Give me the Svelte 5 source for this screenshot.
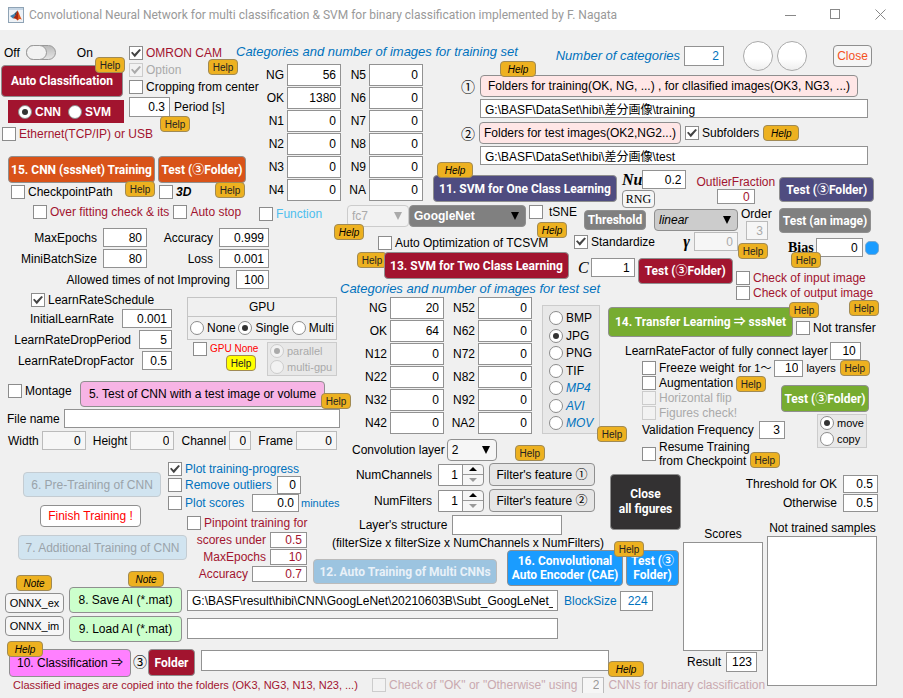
<script>
  const trainingSet = [
    ['NG', 56], ['OK', 1380], ['N1', 0], ['N2', 0], ['N3', 0], ['N4', 0],
    ['N5', 0], ['N6', 0], ['N7', 0], ['N8', 0], ['N9', 0], ['NA', 0]
  ];
  const testSet = [
    ['NG', 20], ['OK', 64], ['N12', 0], ['N22', 0], ['N32', 0], ['N42', 0],
    ['N52', 0], ['N62', 0], ['N72', 0], ['N82', 0], ['N92', 0], ['NA2', 0]
  ];
  const formats = ['BMP', 'JPG', 'PNG', 'TIF', 'MP4', 'AVI', 'MOV'];
  const videoFormats = ['MP4', 'AVI', 'MOV'];
</script>

{#snippet help(place = '', text = 'Help')}
  <button type="button" class="help {place}">{text}</button>
{/snippet}

{#snippet check(text, checked = false, cls = '', disabled = false)}
  <label class="opt {cls}" class:off={disabled}>
    <input type="checkbox" {checked} {disabled} /><span>{text}</span>
  </label>
{/snippet}

{#snippet radio(name, text, checked = false, cls = '', disabled = false)}
  <label class="opt {cls}" class:off={disabled}>
    <input type="radio" {name} {checked} {disabled} /><span>{text}</span>
  </label>
{/snippet}

{#snippet field(text, value, cls = '', disabled = false)}
  <label class="field {cls}">
    <span>{text}</span><input type="text" {value} {disabled} />
  </label>
{/snippet}

<div class="window">
  <header class="titlebar">
    <svg width="16" height="16" viewBox="0 0 16 16" aria-hidden="true">
      <rect x="0.5" y="0.5" width="15" height="15" fill="#eef2f6" stroke="#8fa3b5" />
      <rect x="1" y="1" width="14" height="2" fill="#c5d5e4" />
      <path d="M2 9 L6 7 L8 9 L5 11.500 Z" fill="#3d7fae" />
      <path d="M6 7 L9.500 3.500 L8 9 Z" fill="#27566f" />
      <path d="M9.500 3.500 C11 5 12 10 14 12.500 C12 11.500 11 12 9.500 13.500 C8.500 12 7 11 5 11.500 C7 10 8.500 7 9.500 3.500Z" fill="#e0561b" />
      <path d="M9.500 3.500 C10 6 10.500 9 9.500 13.500 C8.500 12 7 11 5 11.500 C7 10 8.500 7 9.500 3.500Z" fill="#a3260f" />
    </svg>
    <h1>Convolutional Neural Network for multi classification &amp; SVM for binary classification implemented by F. Nagata</h1>
    <div class="winctl">
      <button type="button" aria-label="Minimize"><svg width="12" height="12"><path d="M0 6.500H11" /></svg></button>
      <button type="button" aria-label="Maximize"><svg width="12" height="12"><rect x="0.500" y="0.500" width="9" height="9" /></svg></button>
      <button type="button" aria-label="Close window"><svg width="12" height="12"><path d="M0.500 0.500L10.500 10.500M10.500 0.500L0.500 10.500" /></svg></button>
    </div>
  </header>

  <section class="upper">
    <div class="auto">
      <div class="pair">
        <div class="auto-main">
          <div class="switch-row">
            <span>Off</span>
            <button type="button" class="switch" role="switch" aria-checked="false" aria-label="Auto classification power"></button>
            <span>On</span>
          </div>
          <div class="host">
            <button type="button" class="btn maroon big">Auto Classification</button>
            {@render help('over h-auto')}
          </div>
          <div class="model">
            {@render radio('model', 'CNN', true)}
            {@render radio('model', 'SVM')}
          </div>
        </div>
        <div class="camera">
          {@render check('OMRON CAM', true, 'red')}
          <div class="host">{@render check('Option', true, '', true)}{@render help('over h-option')}</div>
          {@render check('Cropping from center')}
          <div class="host">
            <label class="field"><input type="text" value="0.3" class="w41" /><span>Period [s]</span></label>
            {@render help('over h-period')}
          </div>
        </div>
      </div>
      {@render check('Ethernet(TCP/IP) or USB', false, 'red ether')}
      <div class="train">
        <div class="host">
          <button type="button" class="btn orange w147">15. CNN (sssNet) Training</button>
          {@render help('over h-train')}
        </div>
        <div class="host">
          <button type="button" class="btn orange w88">Test (③Folder)</button>
          {@render help('over h-traintest')}
        </div>
      </div>
      <div class="ckpt">
        {@render check('CheckpointPath')}
        {@render check('3D', false, 'threed')}
      </div>
    </div>

    <div class="upper-right">
      <div class="head">
        <h2>Categories and number of images for training set</h2>
        <div class="headctl">
          <label class="field numcat"><span>Number of categories</span><input type="text" value="2" /></label>
          <div class="lamps"><i></i><i></i></div>
          <button type="button" class="btn plain closebtn">Close</button>
        </div>
      </div>
      <div class="upper-body">
        <div class="counts train-counts">
          {#each trainingSet as [name, n]}{@render field(name, n)}{/each}
        </div>
        <div class="folders">
          <div class="frow host">
            <span class="circ">①</span>
            <button type="button" class="btn pale w378">Folders for training(OK, NG, ...) , for cllasified images(OK3, NG3, ...)</button>
            {@render help('over it wide h-folders')}
          </div>
          <input class="path" type="text" value="G:\BASF\DataSet\hibi\差分画像\training" aria-label="Training folder" />
          <div class="frow second">
            <span class="circ">②</span>
            <button type="button" class="btn pale w202">Folders for test images(OK2,NG2...)</button>
            {@render check('Subfolders', true)}
            {@render help('it wide')}
          </div>
          <input class="path" type="text" value="G:\BASF\DataSet\hibi\差分画像\test" aria-label="Test folder" />
          <div class="oneclass">
            <div class="host one-btn">
              <button type="button" class="btn purple w184">11. SVM for One Class Learning</button>
              {@render help('over it wide h-one')}
            </div>
            <div class="nu">
              <label class="field math"><span>Nu</span><input type="text" value="0.2" class="w44" /></label>
              <button type="button" class="btn plain rng">RNG</button>
            </div>
            <label class="outlier red"><span>OutlierFraction</span><input type="text" value="0" /></label>
            <button type="button" class="btn purple w95 one-test">Test (③Folder)</button>
          </div>
        </div>
      </div>
    </div>
  </section>

  <section class="middle">
    <div class="params">
      <div class="stop-row">
        {@render check('Over fitting check & its', false, 'red')}
        {@render check('Auto stop', false, 'red')}
        {@render check('Function', false, 'sky')}
      </div>
      <div class="limits">
        {@render field('MaxEpochs', 80, 'w44in')}
        {@render field('Accuracy', '0.999', 'w50in')}
        {@render field('MiniBatchSize', 80, 'w44in')}
        {@render field('Loss', '0.001', 'w50in')}
        {@render field('Allowed times of not Improving', 100, 'span w33in')}
      </div>
      <div class="pair">
        <div class="rates">
          {@render check('LearnRateSchedule', true, 'sched')}
          {@render field('InitialLearnRate', '0.001', 'w50in')}
          {@render field('LearnRateDropPeriod', 5, 'w33in')}
          {@render field('LearnRateDropFactor', 0.5, 'w30in')}
        </div>
        <div class="gpu">
          <div class="gpu-panel">
            <h3>GPU</h3>
            <div>
              {@render radio('gpu', 'None')}
              {@render radio('gpu', 'Single', true)}
              {@render radio('gpu', 'Multi')}
            </div>
          </div>
          <div class="gpu-more">
            <div class="host">
              {@render check('GPU None', false, 'alert')}
              {@render help('over yellow h-gpu')}
            </div>
            <div class="panel par">
              {@render radio('par', 'parallel', true, '', true)}
              {@render radio('par', 'multi-gpu', false, '', true)}
            </div>
          </div>
        </div>
      </div>
      <div class="montage">
        {@render check('Montage')}
        <div class="host">
          <button type="button" class="btn pink w245">5. Test of CNN with a test image or volume</button>
          {@render help('over h-montage')}
        </div>
      </div>
      <label class="field fname"><span>File name</span><input type="text" /></label>
      <div class="dims">
        {@render field('Width', 0, 'w44in', true)}
        {@render field('Height', 0, 'w44in', true)}
        {@render field('Channel', 0, 'w22in', true)}
        {@render field('Frame', 0, 'w41in', true)}
      </div>
    </div>

    <div class="work">
      <div class="svm-left">
        <div class="nets host">
          <span class="sel fc off"><select disabled aria-label="Feature layer"><option>fc7</option></select></span>
          <span class="sel net"><select aria-label="Network"><option>GoogleNet</option></select></span>
          {@render check('tSNE', false, 'tsne')}
          {@render help('over it h-fc')}
          {@render help('over it h-tsne')}
        </div>
        {@render check('Auto Optimization of TCSVM', false, 'tcsvm')}
        <div class="host two">
          {@render help('over h-two')}
          <button type="button" class="btn maroon w185 front">13. SVM for Two Class Learning</button>
        </div>
      </div>

      <div class="svm-right">
        <div class="kernel">
          <div class="k1">
            <button type="button" class="btn gray w62">Threshold</button>
            <span class="sel lin"><select aria-label="Kernel"><option>linear</option></select></span>
          </div>
          <div class="k2">
            {@render check('Standardize', true)}
            {@render field('γ', 0, 'math gamma w44in', true)}
          </div>
          <div class="k3">
            {@render field('C', 1, 'math thin w44in')}
            <button type="button" class="btn maroon w95">Test (③Folder)</button>
          </div>
        </div>
        <div class="order-side">
          <div class="order-top">
            <div class="order">
              <label><span>Order</span><input type="text" value="3" disabled /></label>
              {@render help()}
            </div>
            <div class="bias">
              <button type="button" class="btn gray w92">Test (an image)</button>
              <div class="host bias-row">
                {@render field('Bias', 0, 'math straight w47in')}
                <i class="dot"></i>
                {@render help('over h-bias')}
              </div>
            </div>
          </div>
          {@render check('Check of input image', false, 'red')}
          {@render check('Check of output image', false, 'red')}
        </div>
      </div>

      <div class="test-area">
        <h2>Categories and number of images for test set</h2>
        <div class="test-body">
          <div class="counts test-counts">
            {#each testSet as [name, n]}{@render field(name, n)}{/each}
          </div>
          <div class="panel formats">
            {#each formats as f}{@render radio('format', f, f === 'JPG', videoFormats.includes(f) ? 'video' : '')}{/each}
            {@render help('over h-format')}
          </div>
        </div>
        <div class="conv">
          <label for="conv">Convolution layer</label>
          <span class="sel cv"><select id="conv"><option>2</option></select></span>
          {@render help()}
        </div>
      </div>

      <div class="transfer">
        <div class="tl">
          <div class="host">
            <button type="button" class="btn green w185 tall">14. Transfer Learning ⇒ sssNet</button>
            {@render help('over h-tl')}
            {@render help('over h-tl2')}
          </div>
          {@render check('Not transfer', false, 'nott')}
        </div>
        {@render field('LearnRateFactor of fully connect layer', 10, 'lrf')}
        <div class="freeze">
          {@render check('Freeze weight')}
          <label class="field layers"><span>for 1～</span><input type="text" value="10" /><span>layers</span></label>
          {@render help()}
        </div>
        <div class="pair">
          <div class="tchecks">
            <div class="aug">{@render check('Augmentation')}{@render help()}</div>
            {@render check('Horizontal flip', false, '', true)}
            {@render check('Figures check!', false, '', true)}
            {@render field('Validation Frequency', 3, 'valid')}
            <div class="resume">
              {@render check('Resume Training\nfrom Checkpoint', false, 'lines')}
              {@render help()}
            </div>
          </div>
          <div class="ttest">
            <button type="button" class="btn green w88">Test (③Folder)</button>
            <div class="panel mc">
              {@render radio('mc', 'move', true)}
              {@render radio('mc', 'copy')}
            </div>
          </div>
        </div>
      </div>
    </div>
  </section>

  <section class="lower">
    <div class="low-main">
      <div class="pair">
        <div class="low-left">
          <div class="pair">
            <div class="stages">
              <button type="button" class="btn fade w138" disabled>6. Pre-Training of CNN</button>
              <button type="button" class="btn plain finish">Finish Training !</button>
              <button type="button" class="btn fade w169" disabled>7. Additional Training of CNN</button>
            </div>
            <div class="plots">
              {@render check('Plot training-progress', true, 'blue')}
              <div class="prow">{@render check('Remove outliers', false, 'blue')}<input type="text" value="0" class="w24" aria-label="Outliers" /></div>
              <div class="prow">{@render check('Plot scores', false, 'blue')}<input type="text" value="0.0" class="w47" aria-label="Minutes" /><span class="unit blue">minutes</span></div>
              {@render check('Pinpoint training for', false, 'red pin')}
              {@render field('scores under', 0.5, 'red w37in')}
              {@render field('MaxEpochs', 10, 'red w37in')}
              {@render field('Accuracy', 0.7, 'red w55in')}
            </div>
            <div class="filters">
              <div class="pair">
                <div class="fcol">
                  <div class="spin-row">
                    <label for="nch">NumChannels</label>
                    <span class="spin"><input id="nch" type="text" value="1" /><span><button type="button" aria-label="More channels"></button><button type="button" aria-label="Fewer channels"></button></span></span>
                    <button type="button" class="btn light">Filter's feature ①</button>
                  </div>
                  <div class="spin-row">
                    <label for="nfi">NumFilters</label>
                    <span class="spin"><input id="nfi" type="text" value="1" /><span><button type="button" aria-label="More filters"></button><button type="button" aria-label="Fewer filters"></button></span></span>
                    <button type="button" class="btn light">Filter's feature ②</button>
                  </div>
                  {@render field("Layer's structure", '', 'struct')}
                  <p>(filterSize x filterSize x NumChannels x NumFilters)</p>
                </div>
                <button type="button" class="btn black">Close<br />all figures</button>
              </div>
              <div class="encoders">
                <button type="button" class="btn multi" disabled>12. Auto Training of Multi CNNs</button>
                <button type="button" class="btn azure w116">16. Convolutional<br />Auto Encoder (CAE)</button>
                <div class="host">
                  <button type="button" class="btn azure w53">Test (③<br />Folder)</button>
                  {@render help('over h-cae')}
                </div>
              </div>
            </div>
          </div>

          <div class="io">
            <div class="onnx host">
              <button type="button" class="btn plain">ONNX_ex</button>
              <button type="button" class="btn plain">ONNX_im</button>
              {@render help('over it wide h-onnx', 'Note')}
            </div>
            <div class="ai host">
              <button type="button" class="btn mint">8. Save AI (*.mat)</button>
              <button type="button" class="btn mint">9. Load AI (*.mat)</button>
              {@render help('over it wide h-save', 'Note')}
            </div>
            <div class="files">
              <div>
                <input type="text" value="G:\BASF\result\hibi\CNN\GoogLeNet\20210603B\Subt_GoogLeNet_" aria-label="Saved network" />
                {@render field('BlockSize', 224, 'blue block')}
              </div>
              <input type="text" aria-label="Loaded network" />
            </div>
          </div>

          <div class="classify">
            <div class="host">
              <button type="button" class="btn magenta">10. Classification ⇒</button>
              {@render help('over it wide h-class')}
            </div>
            <span class="circ">③</span>
            <button type="button" class="btn maroon w47">Folder</button>
            <div class="host dest">
              <input type="text" aria-label="Classification folder" />
              {@render help('over it wide h-dest')}
            </div>
          </div>
        </div>

        <div class="scores">
          <label for="scores">Scores</label>
          <select id="scores" multiple></select>
          <label class="field result"><span>Result</span><input type="text" value="123" /></label>
        </div>
      </div>

      <div class="foot">
        <span class="red note">Classified images are copied into the folders (OK3, NG3, N13, N23, ...)</span>
        {@render check('Check of "OK" or "Otherwise" using', false, 'binary', true)}
        <input type="text" value="2" disabled aria-label="Number of CNNs" />
        <span class="cnns">CNNs for binary classification</span>
      </div>
    </div>

    <div class="samples">
      {@render field('Threshold for OK', 0.5, 'w35in')}
      {@render field('Otherwise', 0.5, 'w35in')}
      <label for="samples">Not trained samples</label>
      <select id="samples" multiple></select>
    </div>
  </section>
</div>

<style>
  :global(body) { margin: 0; background: #f0f0f0; }
  .window, .window :is(button, input, select) {
    font-family: "Liberation Sans", Arial, "Noto Sans CJK JP", sans-serif;
    font-size: 12px;
    line-height: 14px;
  }
  .window { min-width: 900px; background: #f0f0f0; color: #000; white-space: nowrap; overflow: hidden; }
  .window *, .window *::before, .window *::after { box-sizing: border-box; }
  button, input, select { margin: 0; flex-shrink: 0; }
  h1, h2, h3, p { margin: 0; font-size: 12px; font-weight: 400; }
  h2 { font-size: 13px; font-style: italic; color: #0072bd; }

  .titlebar { display: flex; align-items: center; height: 30px; padding: 0 16px 0 8px; background: #fff; }
  .titlebar h1 { margin-left: 5px; flex: 1; color: #999; font-family: Roboto, "Noto Sans", sans-serif; }
  .winctl { display: flex; gap: 33px; }
  .winctl button { width: 12px; height: 12px; padding: 0; border: 0; background: none; }
  .winctl svg { display: block; fill: none; stroke: #888; }

  .host { position: relative; }
  .pair { display: flex; }
  .red { color: #a2142f; }
  .blue { color: #0072bd; }
  .sky { color: #4dbeee; }

  /* text boxes */
  input[type="text"] {
    height: 19px; padding: 0 4px; border: 1px solid #929292; border-radius: 0;
    background: #fff; color: #000; text-align: right;
  }
  input[type="text"]:disabled { background: #f6f6f6; border-color: #bbb; color: #000; }
  .red input[type="text"], .blue input[type="text"], .numcat input[type="text"] { color: inherit; }
  .field { display: flex; align-items: center; justify-content: flex-end; gap: 4px; }
  .w24 { width: 24px; }
  .w41 { width: 41px; }
  .w44, .w44in input { width: 44px; }
  .w47 { width: 47px; }
  .w22in input { width: 22px; }
  .w30in input { width: 30px; }
  .w33in input { width: 33px; }
  .w35in input { width: 35px; }
  .w37in input { width: 37px; }
  .w41in input { width: 41px; }
  .w47in input { width: 47px; }
  .w50in input { width: 50px; }
  .w55in input { width: 55px; }

  /* tick boxes and radios */
  .opt { display: flex; align-items: center; gap: 3px; }
  .opt input {
    appearance: none; width: 14px; height: 14px; border: 1px solid #8c8c8c;
    background: #fff; display: grid; place-items: center;
  }
  .opt input[type="radio"] { border-radius: 50%; }
  .opt input[type="checkbox"]:checked::before {
    content: ""; width: 10px; height: 9px; background: #444;
    clip-path: polygon(0 48%, 14% 36%, 36% 62%, 84% 6%, 100% 18%, 38% 96%);
  }
  .opt input[type="radio"]:checked::before { content: ""; width: 6px; height: 6px; border-radius: 50%; background: #333; }
  .off { color: #aaa; }
  .off input { background: #f2f2f2; border-color: #ccc; }
  .off input:checked::before { background: #aaa !important; }

  /* buttons */
  .btn {
    height: 27px; padding: 0; border: 1px solid #8f8f8f; border-radius: 4px;
    background: #f6f6f6; color: #000; text-align: center; white-space: nowrap;
  }
  .maroon, .orange, .purple, .gray, .green, .black, .azure, .multi { color: #fff; font-weight: 700; }
  .window :is(.maroon, .orange, .purple, .gray, .green, .black, .azure, .multi) {
    font-family: Roboto, "Liberation Sans", "Noto Sans CJK JP", sans-serif;
  }
  .maroon { background: #a2142f; }
  .orange { background: #d95319; }
  .purple { background: #4f4c80; }
  .gray { background: #808080; }
  .green { background: #77ac30; }
  .black { background: #333132; }
  .azure { background: #1a9cff; }
  .multi { background: #9cc4e0; color: #e9f1f8; border-color: #bbb; }
  .pale { background: #ffe6e6; }
  .pink { background: #f7b4e5; }
  .mint { background: #ccffcc; }
  .magenta { background: #ff80ff; }
  .light { background: #e6e6e6; }
  .fade { background: #d1e4f0; border-color: #c4ccd2; color: #9aa3aa; }
  .w47.btn { width: 47px; }
  .w53 { width: 53px; }
  .w62 { width: 62px; }
  .w88 { width: 88px; }
  .w92 { width: 92px; }
  .w95 { width: 95px; }
  .w116 { width: 116px; }
  .w138 { width: 138px; }
  .w147 { width: 147px; }
  .w169 { width: 169px; }
  .w184 { width: 184px; }
  .w185 { width: 185px; }
  .w202 { width: 202px; }
  .w245 { width: 245px; }
  .w378 { width: 378px; }

  .window .help {
    width: 30px; height: 16px; padding: 1px 0 0; border: 1px solid #a08a55; border-radius: 4px;
    background: #edb120; color: #222; font-size: 10px; line-height: 13px; z-index: 1;
  }
  .window .help.it { font-style: italic; color: #000; }
  .window .help.wide { width: 36px; }
  .window .help.yellow { background: #ffff00; }
  .over { position: absolute; }
  .h-auto { left: 95px; top: -8px; }
  .h-option { left: 79px; top: -4px; }
  .h-period { left: 31px; top: 19px; }
  .h-train { right: 0; top: 25px; }
  .h-traintest { right: 1px; top: 26px; }
  .h-folders { left: 67px; top: -14px; }
  .h-one { left: 4px; top: -13px; }
  .h-gpu { left: 33px; top: 13px; }
  .h-montage { right: -26px; top: 12px; }
  .h-fc { left: -6px; top: 19px; }
  .h-tsne { left: 197px; top: 17px; }
  .h-two { left: -27px; top: 0; }
  .h-bias { left: 12px; top: 14px; }
  .h-format { right: -28px; bottom: -9px; }
  .h-tl { right: -26px; top: -5px; }
  .h-tl2 { right: -86px; top: -7px; }
  .h-cae { left: -12px; top: -9px; }
  .h-onnx { left: 11px; top: -12px; }
  .h-save { left: 59px; top: -16px; }
  .h-class { left: -2px; top: -8px; }
  .h-dest { right: -35px; top: 11px; }
  .front { position: relative; z-index: 2; }

  .panel { border: 1px solid #ccc; background: #e8e8e8; }
  .circ { width: 14px; font: 14px/16px "Noto Sans CJK JP", sans-serif; }

  /* drop-downs */
  .sel { position: relative; display: block; flex-shrink: 0; }
  .sel select {
    appearance: none; width: 100%; height: 22px; padding: 0 4px; border: 1px solid #8f8f8f;
    border-radius: 4px; background: #f6f6f6; color: #000; opacity: 1;
  }
  .sel::after {
    content: ""; position: absolute; right: 7px; top: 7px; pointer-events: none;
    border: 4px solid transparent; border-top: 8px solid #000; border-bottom: 0;
  }
  .fc { width: 62px; margin-left: 7px; }
  .fc select { color: #aaa; border-color: #ccc; background: #f2f2f2; }
  .fc::after { border-top-color: #aaa; }
  .net { width: 117px; }
  .net select { background: #808080; color: #fff; font-weight: 700; }
  .lin { width: 84px; margin-left: 8px; }
  .lin select { background: #ccc; font-style: italic; }
  .cv { width: 50px; }

  /* upper */
  .upper { display: flex; padding-top: 10px; }
  .auto { width: 262px; flex-shrink: 0; }
  .auto-main { width: 124px; margin-right: 5px; }
  .switch-row { display: flex; align-items: center; height: 25px; padding-left: 4px; }
  .switch {
    width: 30px; height: 15px; margin: 0 21px 0 6px; padding: 0; border: 1px solid #999;
    border-radius: 8px; background: linear-gradient(#bbb, #e4e4e4);
  }
  .switch::before {
    content: ""; display: block; width: 21px; height: 15px; margin: -1px; border: 1px solid #999;
    border-radius: 8px; background: #f2f2f2;
  }
  .window .big { width: 122px; height: 32px; margin-left: 1px; display: block; }
  .model {
    display: flex; gap: 7px; align-items: center; height: 23px; margin: 3px 0 0 8px; padding-left: 10px;
    background: #a2142f; color: #fff; font-weight: 700;
  }
  .camera { display: flex; flex-direction: column; gap: 3px; padding-top: 6px; }
  .camera .field { justify-content: flex-start; }
  .camera input[type="text"] { height: 20px; }
  .ether { padding-left: 2px; margin-top: 4px; }
  .train { display: flex; gap: 3px; margin: 15px 0 2px 8px; }
  .train .btn { display: block; }
  .ckpt { display: grid; grid-template-columns: 148px auto; padding-left: 11px; }
  .threed { font-weight: 700; font-style: italic; }

  .upper-right { flex: 1; }
  .head { display: flex; height: 24px; padding-right: 31px; justify-content: space-between; align-items: flex-start; }
  .head h2 { margin: 5px 0 0 -26px; }
  .headctl { display: flex; align-items: center; height: 32px; }
  .numcat { color: #0072bd; font-size: 13px; font-style: italic; }
  .numcat input { width: 40px; height: 20px; }
  .lamps { display: flex; gap: 4px; margin: 0 26px 0 19px; }
  .lamps i {
    width: 30px; height: 30px; border: 1px solid #aaa; border-radius: 50%;
    background: linear-gradient(#fff 60%, #eee);
  }
  .closebtn { width: 39px; height: 22px; color: #f4511e; }
  .upper-body { display: flex; }
  .counts { display: grid; grid-template-rows: repeat(6, 22px); grid-auto-flow: column; row-gap: 1px; }
  .counts .field { gap: 3px; }
  .counts input { width: 54px; height: 22px; }
  .train-counts { grid-template-columns: 79px 82px; }
  .folders { flex: 1; display: flex; flex-direction: column; padding: 11px 0 0 10px; }
  .frow { display: flex; align-items: center; gap: 5px; padding-left: 28px; }
  .frow .btn { height: 22px; }
  .second { gap: 4px; margin-top: 4px; }
  .folders .path { margin: 2px 35px 0 47px; text-align: left; }
  .oneclass { display: flex; align-items: flex-start; margin: 5px 0 -4px; }
  .one-btn { margin-top: 5px; }
  .nu { margin-left: 5px; }
  .rng { width: 33px; height: 18px; display: block; margin-top: 1px; font-family: "Liberation Serif", serif !important; }
  .math { font: italic 700 16px/18px "Liberation Serif", serif; gap: 0; }
  .math.thin { font-weight: 400; gap: 2px; }
  .math.gamma { gap: 4px; }
  .math.straight { font-style: normal; gap: 2px; }
  .math.straight span { font-size: 14px; }
  .outlier { margin: 5px 0 0 10px; display: flex; flex-direction: column; align-items: center; }
  .outlier input { width: 38px; height: 15px; }
  .one-test { height: 25px; margin: 7px 0 0 4px; }

  /* middle */
  .middle { display: flex; }
  .params { width: 340px; flex-shrink: 0; padding-top: 1px; }
  .stop-row { display: flex; gap: 4px; padding-left: 33px; height: 14px; }
  .stop-row .sky { margin: 3px 0 0 14px; }
  .limits { display: grid; grid-template-columns: 147px 122px; row-gap: 2px; margin: 9px 0 4px; }
  .limits .field { gap: 6px; }
  .span { grid-column: span 2; }
  .rates { display: flex; flex-direction: column; gap: 2px; width: 172px; }
  .rates .field { gap: 8px; }
  .sched { padding-left: 31px; }
  .gpu { width: 150px; margin-left: 15px; padding-top: 4px; }
  .gpu-panel { border: 1px solid #c4c4c4; height: 43px; }
  .gpu-panel h3 { height: 19px; line-height: 18px; text-align: center; border-bottom: 1px solid #c4c4c4; }
  .gpu-panel div { display: flex; justify-content: space-between; padding: 4px 2px 0; }
  .gpu-more { display: flex; justify-content: space-between; margin-top: 2px; padding-left: 6px; }
  .alert { color: #f00; }
  .alert span { font-size: 10px; }
  .par { width: 70px; height: 34px; display: flex; flex-direction: column; justify-content: space-evenly; padding-left: 2px; font-size: 11px; }
  .montage { display: flex; justify-content: space-between; align-items: flex-start; padding: 0 15px 0 8px; margin: 5px 0 2px; }
  .montage > .opt { margin-top: 3px; }
  .montage .btn { height: 26px; display: block; }
  .fname { padding-left: 7px; }
  .fname input { flex: 1; text-align: left; }
  .dims { display: flex; justify-content: space-between; padding: 0 3px 0 8px; margin-top: 3px; }
  .dims .field { gap: 3px; }

  .work { flex: 1; display: grid; grid-template-columns: 232px 28px 1fr; grid-template-rows: 78px 20px auto; align-items: start; }
  .svm-left { grid-area: 1 / 1 / 2 / 2; padding-top: 1px; }
  .nets { display: flex; height: 23px; }
  .tsne { height: 14px; margin-left: 3px; gap: 6px; }
  .tcsvm { margin-top: 8px; padding-left: 38px; }
  .two { margin: 2px 0 0 44px; }
  .svm-right { grid-area: 1 / 2 / 3 / 4; display: flex; }
  .kernel { width: 166px; padding-top: 5px; }
  .k1, .k2, .k3 { display: flex; }
  .k1 { align-items: center; padding-left: 12px; }
  .k1 .btn { height: 20px; }
  .k2 { justify-content: space-between; margin: 1px 0 7px; padding-left: 2px; }
  .k2 input[type="text"] { color: #aaa; }
  .k3 { align-items: flex-start; gap: 3px; padding-left: 6px; }
  .k3 .btn { height: 26px; }
  .order-side { display: flex; flex-direction: column; gap: 1px; }
  .order-side > .opt { margin-left: -2px; }
  .order-top { display: flex; height: 66px; }
  .order { width: 41px; padding-top: 3px; }
  .order label { display: flex; flex-direction: column; padding-left: 3px; }
  .order label input[type="text"] { width: 22px; margin: 0 0 3px 5px; color: #aaa; }
  .order .help { display: block; }
  .bias { padding-top: 4px; }
  .bias .btn { height: 25px; display: block; }
  .bias-row { display: flex; align-items: center; margin-top: 5px; padding-left: 9px; gap: 2px; }
  .dot { width: 14px; height: 14px; border-radius: 5px; background: #1a9cff; border: 1px solid #7aa9d0; }

  .test-area { grid-area: 2 / 1 / 4 / 3; }
  .test-body { display: flex; margin-top: 1px; }
  .test-counts { grid-template-columns: 104px 88px; }
  .formats { position: relative; width: 59px; height: 129px; margin: 8px 0 0 10px; padding: 5px 0 3px 6px; display: flex; flex-direction: column; justify-content: space-between; }
  .video { color: #0072bd; font-style: italic; }
  .conv { display: flex; align-items: center; gap: 2px; margin-top: 5px; padding-left: 12px; }
  .conv .help { margin: 5px 0 0 16px; }

  .transfer { grid-area: 3 / 3 / 4 / 4; padding-top: 5px; }
  .tl { display: flex; padding-left: 8px; }
  .tall { height: 30px; display: block; }
  .nott { height: 14px; margin: 14px 0 0 3px; }
  .lrf { justify-content: flex-start; gap: 2px; padding-left: 25px; margin-top: 5px; }
  .lrf input { width: 31px; height: 18px; }
  .freeze { display: flex; align-items: center; gap: 4px; height: 16px; padding-left: 42px; }
  .layers { gap: 3px; font-size: 11px; }
  .layers input { width: 29px; height: 17px; }
  .tchecks { width: 181px; display: flex; flex-direction: column; gap: 1px; padding-left: 42px; }
  .aug { display: flex; gap: 3px; height: 14px; }
  .valid { justify-content: flex-start; gap: 5px; }
  .valid input { width: 26px; height: 18px; }
  .resume { display: flex; align-items: flex-end; }
  .lines { white-space: pre; }
  .ttest { padding-top: 9px; }
  .ttest .btn { display: block; }
  .mc { width: 50px; height: 34px; margin: 2px 0 0 36px; padding-left: 2px; display: flex; flex-direction: column; justify-content: space-evenly; font-size: 11px; }

  /* lower */
  .lower { display: flex; margin-top: -6px; }
  .low-main { width: 767px; flex-shrink: 0; }
  .low-left { width: 682px; }
  .stages { width: 168px; display: flex; flex-direction: column; align-items: flex-start; padding: 10px 0 0 18px; }
  .stages .fade { height: 25px; flex-shrink: 0; }
  .stages .w138 { margin-left: 5px; }
  .finish { width: 101px; height: 22px; margin: 8px 0 8px 22px; color: #f00; background: #fff; }
  .plots { width: 139px; margin-right: 6px; }
  .prow { display: flex; align-items: center; width: 133px; height: 18px; }
  .prow > input { height: 18px; margin-left: auto; }
  .unit { width: 0; padding-left: 2px; font-size: 11px; }
  .pin { padding-left: 19px; margin: 4px 0 2px; }
  .plots .field input { height: 16px; }
  .plots .field { margin-bottom: 1px; }
  .filters { flex: 1; padding-top: 1px; }
  .fcol { width: 292px; display: flex; flex-direction: column; gap: 3px; }
  .spin-row { display: flex; align-items: center; }
  .spin-row label { width: 119px; margin-right: 6px; text-align: right; }
  .spin-row .btn { width: 106px; height: 23px; margin-left: 5px; }
  .spin { display: flex; width: 46px; height: 22px; border: 1px solid #8f8f8f; border-radius: 0 4px 4px 0; overflow: hidden; background: #f6f6f6; }
  .spin input[type="text"] { width: 24px; height: 20px; border-width: 0 1px 0 0; }
  .spin > span { flex: 1; display: flex; flex-direction: column; }
  .spin button { flex: 1; padding: 0; border: 0; background: none; display: grid; place-items: center; }
  .spin button + button { border-top: 1px solid #999; }
  .spin button::before { content: ""; border: 4px solid transparent; border-top: 0; border-bottom: 4px solid #000; }
  .spin button + button::before { border-top: 4px solid #999; border-bottom: 0; }
  .struct { justify-content: flex-start; padding-left: 46px; gap: 5px; }
  .struct input { width: 110px; height: 20px; }
  .fcol p { padding-left: 19px; margin-top: -2px; }
  .black { width: 71px; height: 56px; margin: 11px 0 0 5px; line-height: 15px !important; }
  .encoders { display: flex; align-items: flex-end; }
  .multi { width: 184px; height: 25px; margin: 0 10px 2px 0; }
  .azure { height: 36px; display: block; margin-right: 3px; }

  .io { display: flex; align-items: flex-start; padding-left: 5px; margin-top: 1px; }
  .onnx { width: 59px; display: flex; flex-direction: column; gap: 3px; padding-top: 6px; }
  .onnx .plain { height: 20px; font-size: 11px; }
  .ai { width: 113px; margin: 0 5px; display: flex; flex-direction: column; gap: 3px; }
  .ai .mint { height: 26px; }
  .files { display: flex; flex-direction: column; gap: 7px; padding-top: 3px; }
  .files > div { display: flex; gap: 6px; }
  .files > input, .files > div > input { width: 371px; height: 21px; text-align: left; }
  .block { gap: 3px; }
  .block input { width: 33px; height: 20px; }
  .classify { display: flex; align-items: flex-start; margin-top: 7px; padding-left: 9px; }
  .magenta { width: 122px; height: 28px; display: block; }
  .classify .circ { margin: 4px 1px 0 2px; }
  .dest { flex: 1; margin: 1px 73px 0 6px; }
  .dest input { width: 100%; height: 21px; display: block; text-align: left; }
  .scores { padding: 65px 0 0 1px; display: flex; flex-direction: column; }
  .scores > label:first-child { text-align: center; width: 80px; margin-bottom: 1px; }
  .scores select, .samples select {
    width: 80px; height: 109px; padding: 0; border: 1px solid #929292; border-radius: 0; background: #fff; overflow: hidden;
  }
  .result { justify-content: flex-start; gap: 5px; padding-left: 4px; margin-top: 1px; }
  .result input { width: 31px; height: 20px; }
  .foot { display: flex; align-items: center; height: 16px; padding-left: 13px; }
  .note { font-size: 11px; width: 359px; }
  .binary, .cnns { color: #c9a9af; }
  .foot > input[type="text"] { width: 22px; height: 17px; margin: 0 4px 0 5px; color: #999; }
  .samples { width: 111px; padding-top: 13px; display: flex; flex-direction: column; gap: 1px; }
  .samples .field { gap: 6px; }
  .samples .field input { height: 18px; }
  .samples > label:not(.field) { margin-top: 8px; text-align: center; }
  .samples select { width: 110px; height: 150px; }
</style>
